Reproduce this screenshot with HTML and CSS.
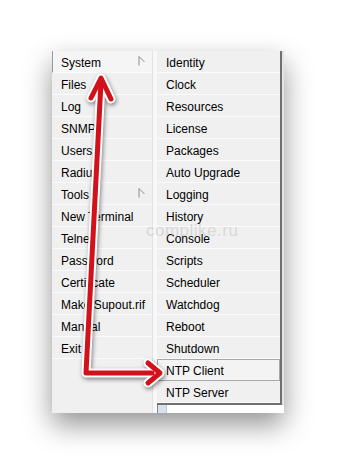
FILE: index.html
```html
<!DOCTYPE html>
<html lang="en">
<head>
<meta charset="UTF-8">
<meta name="viewport" content="width=device-width, initial-scale=1.0">
<title>System menu</title>
<link rel="stylesheet" href="styles.css">
</head>
<body>
<div class="shot">
    <ul class="menu main">
        <li class="active">System <svg class="more" width="7" height="10" viewBox="0 0 7 10"><path d="M1 0.5 V9.5 M1 0.5 L6.5 6" fill="none" stroke="#8c8c8c" stroke-width="1"/></svg></li>
        <li>Files</li>
        <li>Log</li>
        <li>SNMP</li>
        <li>Users</li>
        <li>Radius</li>
        <li>Tools <svg class="more" width="7" height="10" viewBox="0 0 7 10"><path d="M1 0.5 V9.5 M1 0.5 L6.5 6" fill="none" stroke="#8c8c8c" stroke-width="1"/></svg></li>
        <li>New Terminal</li>
        <li>Telnet</li>
        <li>Password</li>
        <li>Certificate</li>
        <li>Make Supout.rif</li>
        <li>Manual</li>
        <li>Exit</li>
    </ul>
    <div class="divider"></div>
    <div class="sub-wrap">
        <ul class="menu sub">
            <li>Identity</li>
            <li>Clock</li>
            <li>Resources</li>
            <li>License</li>
            <li>Packages</li>
            <li>Auto Upgrade</li>
            <li>Logging</li>
            <li>History</li>
            <li>Console</li>
            <li>Scripts</li>
            <li>Scheduler</li>
            <li>Watchdog</li>
            <li>Reboot</li>
            <li>Shutdown</li>
            <li class="selected">NTP Client</li>
            <li>NTP Server</li>
        </ul>
        <div class="sub-foot"><span class="foot-box"></span></div>
    </div>
</div>
<div class="watermark">complike.ru</div>
<svg class="arrows" width="338" height="466" viewBox="0 0 338 466">
    <g fill="none" stroke-linecap="round" stroke-linejoin="round">
        <path d="M101 82 L86 373 L150 373" stroke="#fff" stroke-width="9"/>
        <path d="M91 98 L101 78 L111 99" stroke="#fff" stroke-width="9"/>
        <path d="M148 363 L160 373 L148 383" stroke="#fff" stroke-width="9"/>
        <path d="M101 82 L86 373 L152 373" stroke="#d3111b" stroke-width="5"/>
        <path d="M91 98 L101 78 L111 99" stroke="#d3111b" stroke-width="5"/>
        <path d="M148 363 L160 373 L148 383" stroke="#d3111b" stroke-width="5"/>
    </g>
</svg>
</body>
</html>
```

FILE: styles.css
```css
body {
    margin: 0;
    background: #fff;
    font-family: "Liberation Sans", Arial, sans-serif;
    font-size: 12px;
    color: #000;
    position: relative;
    width: 338px;
    height: 466px;
    overflow: hidden;
}
.shot {
    margin: 51px 0 0 52px;
    width: 232px;
    height: 362px;
    display: flex;
    background: #f0f0f0;
    box-shadow: 0 12px 26px rgba(0, 0, 0, 0.42);
}
.menu {
    list-style: none;
    margin: 0;
    padding: 0;
}
.menu li {
    height: 21px;
    line-height: 24px;
    padding-left: 9px;
    border-bottom: 1px solid #fbfbfb;
    position: relative;
}
.main {
    width: 100px;
    background: #f0f0f0;
}
.main .active {
    border-left: 1px solid #9a9a9a;
    padding-left: 8px;
    background: #f5f5f5;
}
.more {
    position: absolute;
    right: 7px;
    top: 5px;
}
.divider {
    width: 4px;
    background: #f8f8f8;
    border-left: 1px solid #e2e2e2;
}
.sub-wrap {
    width: 127px;
    display: flex;
    flex-direction: column;
    background: #e4e4e4;
}
.sub {
    width: 123px;
    border-right: 2px solid #707070;
    border-bottom: 2px solid #707070;
    background: #f0f0f0;
}
.sub .selected {
    border: 1px solid #a8a8a8;
    padding-left: 8px;
    height: 20px;
    line-height: 22px;
    background: #f3f3f3;
}
.sub-foot {
    flex: 1;
    background: #fff;
    display: flex;
}
.foot-box {
    width: 8px;
    background: #d8e2ec;
    border-left: 1px solid #8a8a8a;
    border-right: 1px solid #c0c8d0;
}
.watermark {
    position: absolute;
    left: 146px;
    top: 221px;
    font-size: 17px;
    color: rgba(190, 190, 190, 0.5);
    letter-spacing: 0.5px;
}
.arrows {
    position: absolute;
    left: 0;
    top: 0;
    pointer-events: none;
    filter: drop-shadow(1px 2px 2px rgba(0, 0, 0, 0.45));
}
```
